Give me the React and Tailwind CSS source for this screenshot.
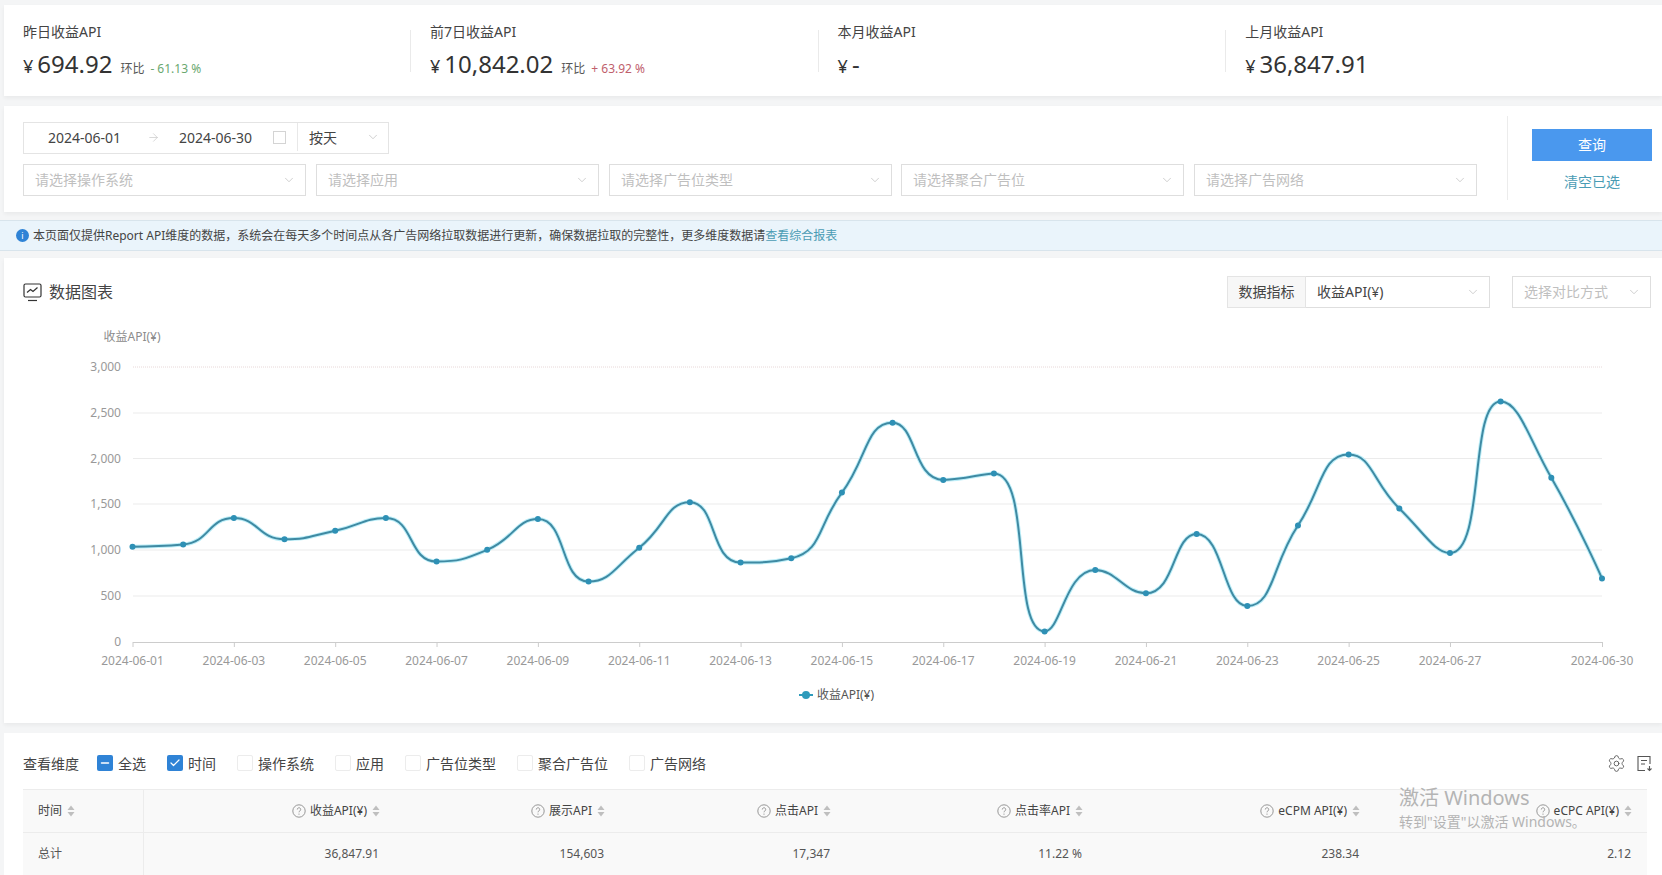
import React from "react";
import { ChevronDown, ArrowRight, Settings, Check, Minus } from "lucide-react";

const W = 1662, H = 470;
const TOP = 258; // chart card top in page coordinates
const sx = (d) => 132.5 + (d * (1602 - 132.5)) / 29;
const raw = [516,514,489,509,501,489,530,519,490,549,517,474,531,527,465,399,453,447,596,538,560,504,572,496,429,480,522,379,451,546];
const pts = raw.map((y, i) => [sx(i), y * 1.0594 - TOP]);

function smooth(p, s = 0.5) {
  const clamp = (v, a, b) => Math.max(Math.min(a, b), Math.min(Math.max(a, b), v));
  let d = `M${p[0][0]} ${p[0][1]}`;
  let cx0 = p[0][0], cy0 = p[0][1];
  for (let i = 0; i < p.length - 1; i++) {
    const prev = p[i];
    const [x, y] = p[i + 1];
    const next = p[i + 2];
    let c1x = x, c1y = y, nx = x, ny = y;
    if (next) {
      const vx0 = next[0] - prev[0], vy0 = next[1] - prev[1];
      const l1 = Math.hypot(x - prev[0], y - prev[1]);
      const l2 = Math.hypot(next[0] - x, next[1] - y);
      const r = l2 / (l1 + l2);
      nx = clamp(x + vx0 * s * r, x, next[0]);
      ny = clamp(y + vy0 * s * r, y, next[1]);
      c1x = clamp(x - (nx - x) * l1 / l2, prev[0], x);
      c1y = clamp(y - (ny - y) * l1 / l2, prev[1], y);
      nx = x + (x - c1x) * l2 / l1;
      ny = y + (y - c1y) * l2 / l1;
    }
    d += ` C${cx0} ${cy0} ${c1x} ${c1y} ${x} ${y}`;
    cx0 = nx; cy0 = ny;
  }
  return d;
}

const yTicks = [["3,000",367],["2,500",413],["2,000",458.5],["1,500",504],["1,000",550],["500",596]];
const xLabels = [0,2,4,6,8,10,12,14,16,18,20,22,24,26];

function Chart() {
  const path = smooth(pts);
  return (
    <svg width={W - 4} height={H} viewBox={`4 ${0} ${W - 4} ${H}`} className="absolute left-0 top-0" style={{ fontFamily: '"Noto Sans","Noto Sans CJK SC",sans-serif' }}>
      <text x="132" y={335 - TOP + 6} fontSize="12" fill="#8c8c8c" textAnchor="middle">收益API(¥)</text>
      {yTicks.map(([t, y]) => (
        <g key={t}>
          <line x1="133" x2="1602" y1={y - TOP} y2={y - TOP} stroke={t === "3,000" ? "#e8d8d8" : "#ebebeb"} strokeDasharray={t === "3,000" ? "1 1" : "none"} />
          <text x="121" y={y - TOP + 4} fontSize="12" fill="#999" textAnchor="end">{t}</text>
        </g>
      ))}
      <text x="121" y={642 - TOP + 4} fontSize="12" fill="#999" textAnchor="end">0</text>
      <line x1="133" x2="1602" y1={642 - TOP + .5} y2={642 - TOP + .5} stroke="#ccc" />
      {[...xLabels, 29].map((d) => (
        <g key={d}>
          <line x1={sx(d) + .5} x2={sx(d) + .5} y1={642 - TOP} y2={647 - TOP} stroke="#ccc" />
          <text x={sx(d)} y={665 - TOP} fontSize="12" fill="#999" textAnchor="middle">{`2024-06-${String(d + 1).padStart(2, "0")}`}</text>
        </g>
      ))}
      <path d={path} fill="none" stroke="#bdeef8" strokeWidth="4" />
      <path d={path} fill="none" stroke="#3f8aa3" strokeWidth="2" />
      {pts.map(([x, y], i) => <circle key={i} cx={x} cy={y} r="3" fill="#2e90b5" />)}
      <line x1="799" x2="813" y1={695 - TOP} y2={695 - TOP} stroke="#2e9bbb" strokeWidth="2" />
      <circle cx="806" cy={695 - TOP} r="4" fill="#2e9bbb" />
      <text x="817" y={699 - TOP} fontSize="12" fill="#555">收益API(¥)</text>
    </svg>
  );
}

function Stat({ label, value, ratio, ratioClass, divider }) {
  return (
    <div className="relative w-[407.6px] pl-[19px] pt-[16px] first:w-[407px]">
      <div className="text-[14px] leading-[22px] text-[#444]">{label}</div>
      <div className="mt-[5px] flex items-baseline text-[#333]">
        <span className="text-[18px] leading-[32px]">¥</span>
        <span className="ml-[4px] text-[24px] leading-[32px]">{value}</span>
        {ratio && <span className="ml-[8px] text-[12px] text-[#555]">环比</span>}
        {ratio && <span className={`ml-[6px] text-[12px] ${ratioClass}`}>{ratio}</span>}
      </div>
      {divider && <div className="absolute right-0 top-[25px] h-[42px] w-px bg-[#eaeaea]" />}
    </div>
  );
}

function Sel({ text, w, ph = true, className = "" }) {
  return (
    <div className={`flex h-[32px] items-center justify-between border border-[#dedede] bg-white pl-[11px] pr-[9px] ${className}`} style={{ width: w }}>
      <span className={`pb-[2px] text-[14px] ${ph ? "text-[#bfbfbf]" : "text-[#444]"}`}>{text}</span>
      <ChevronDown size={14} strokeWidth={1.2} className="text-[#bbb]" />
    </div>
  );
}

function Box({ state, label }) {
  return (
    <div className="flex items-center gap-[5px]">
      <div className={`flex h-[16px] w-[16px] items-center justify-center rounded-[2px] ${state ? "bg-[#2f83d6]" : "border border-[#ececec] bg-white"}`}>
        {state === "check" && <Check size={12} strokeWidth={2.4} className="text-white" />}
        {state === "minus" && <Minus size={12} strokeWidth={3} className="text-white" />}
      </div>
      <span className="text-[14px] text-[#444]">{label}</span>
    </div>
  );
}

function Sort() {
  return (
    <svg width="8" height="12" viewBox="0 0 8 12" className="ml-[5px]">
      <path d="M4 0.5 L7.5 5 L0.5 5 Z" fill="#bfbfbf" />
      <path d="M4 11.5 L7.5 7 L0.5 7 Z" fill="#bfbfbf" />
    </svg>
  );
}

function Q() {
  return (
    <svg width="14" height="14" viewBox="0 0 14 14" className="mr-[4px]">
      <circle cx="7" cy="7" r="6.2" fill="none" stroke="#8c8c8c" strokeWidth="0.9" />
      <path d="M5.3 5.5 a1.7 1.7 0 1 1 2.6 1.4 c-.6 .4 -.9 .7 -.9 1.4" fill="none" stroke="#8c8c8c" strokeWidth="0.9" />
      <circle cx="7" cy="10.1" r="0.6" fill="#8c8c8c" />
    </svg>
  );
}

function Th({ label, w }) {
  return (
    <div className="flex h-full shrink-0 items-center justify-end pr-[15px] text-[12px] text-[#444]" style={{ width: w }}>
      <Q />{label}<Sort />
    </div>
  );
}

function Td({ v, w }) {
  return <div className="shrink-0 pr-[16px] text-right text-[12px] text-[#555]" style={{ width: w }}>{v}</div>;
}

const cols = [
  ["收益API(¥)", "36,847.91", 251],
  ["展示API", "154,603", 225],
  ["点击API", "17,347", 226],
  ["点击率API", "11.22 %", 252],
  ["eCPM API(¥)", "238.34", 277],
  ["eCPC API(¥)", "2.12", 272],
];

export default function App() {
  return (
    <div className="relative h-[875px] w-[1662px] overflow-hidden bg-[#f4f5f6] pl-[4px] pt-[5px]" style={{ fontFamily: '"Noto Sans","Noto Sans CJK SC",sans-serif' }}>
      {/* stats */}
      <div className="flex h-[91px] bg-white shadow-[0_2px_4px_rgba(0,0,0,0.05)]">
        <Stat label="昨日收益API" value="694.92" ratio="- 61.13 %" ratioClass="text-[#6aa86f]" divider />
        <Stat label="前7日收益API" value="10,842.02" ratio="+ 63.92 %" ratioClass="text-[#c0606c]" divider />
        <Stat label="本月收益API" value="-" divider />
        <Stat label="上月收益API" value="36,847.91" />
      </div>

      {/* filters */}
      <div className="mt-[10px] flex h-[106px] bg-white shadow-[0_2px_4px_rgba(0,0,0,0.05)]">
        <div className="w-[1503px] pl-[19px] pt-[16px]">
          <div className="flex h-[32px] w-[366px] items-center border border-[#e4e4e4] pb-[2px] text-[14px] text-[#444]">
            <span className="ml-[24px] w-[72px] whitespace-nowrap">2024-06-01</span>
            <ArrowRight size={13} strokeWidth={1.2} className="ml-[27px] text-[#c4c4c4]" />
            <span className="ml-[19px] w-[72px] whitespace-nowrap">2024-06-30</span>
            <div className="ml-[22px] h-[13px] w-[13px] border border-[#d4d4d4]" />
            <div className="ml-[11px] h-full w-px bg-[#e8e8e8]" />
            <span className="ml-[11px]">按天</span>
            <ChevronDown size={14} strokeWidth={1.2} className="ml-[29px] text-[#bbb]" />
          </div>
          <div className="mt-[10px] flex gap-[10px]">
            <Sel text="请选择操作系统" w="283px" />
            <Sel text="请选择应用" w="283px" />
            <Sel text="请选择广告位类型" w="283px" />
            <Sel text="请选择聚合广告位" w="283px" className="ml-[-1px]" />
            <Sel text="请选择广告网络" w="283px" />
          </div>
        </div>
        <div className="mt-[10px] h-[84px] w-px bg-[#ececec]" />
        <div className="ml-[24px] flex flex-col items-center pt-[23px]">
          <div className="flex h-[32px] w-[120px] items-center justify-center bg-[#4a98ee] pb-[2px] text-[14px] text-white">查询</div>
          <div className="mt-[10px] text-[14px] leading-[22px] text-[#4a9cb4]">清空已选</div>
        </div>
      </div>

      {/* alert */}
      <div className="mt-[8px] ml-[-4px] flex h-[31px] items-center border-y border-[#d8e4ec] bg-[#eaf4fb] pl-[16px] text-[12px] text-[#444]">
        <div className="mr-[4px] flex h-[13px] w-[13px] items-center justify-center rounded-full bg-[#2f83d6] text-[9px] leading-none text-white">i</div>
        本页面仅提供Report API维度的数据，系统会在每天多个时间点从各广告网络拉取数据进行更新，确保数据拉取的完整性，更多维度数据请<span className="text-[#4a9cb4]">查看综合报表</span>
      </div>

      {/* chart */}
      <div className="relative mt-[7px] h-[465px] bg-white shadow-[0_2px_4px_rgba(0,0,0,0.05)]">
        <Chart />
        <div className="relative flex items-center pl-[19px] pt-[18px]">
          <svg width="19" height="19" viewBox="0 0 19 19" fill="none" stroke="#333" strokeWidth="1.2">
            <rect x="1" y="1" width="17" height="13" rx="1.5" />
            <path d="M4 9.5 L7.5 6.5 L10 8.5 L14.5 4.5" />
            <path d="M5 17.5 H14" />
          </svg>
          <span className="ml-[7px] text-[16px] leading-[30px] text-[#444]">数据图表</span>
          <div className="ml-auto mr-[11px] flex">
            <div className="flex h-[32px] w-[79px] items-center justify-center border border-[#e4e4e4] bg-[#f7f7f7] pb-[2px] text-[14px] text-[#444]">数据指标</div>
            <Sel text="收益API(¥)" w="184px" ph={false} className="border-l-0" />
            <Sel text="选择对比方式" w="139px" className="ml-[22px]" />
          </div>
        </div>
      </div>

      {/* table */}
      <div className="mt-[10px] h-[200px] bg-white pl-[19px] pt-[19px]">
        <div className="flex h-[22px] items-center gap-[21px] text-[14px]">
          <span className="mr-[-3px] text-[#444]">查看维度</span>
          <Box state="minus" label="全选" />
          <Box state="check" label="时间" />
          <Box label="操作系统" />
          <Box label="应用" />
          <Box label="广告位类型" />
          <Box label="聚合广告位" />
          <Box label="广告网络" />
          <div className="ml-auto mr-[9px] flex items-center gap-[10px]">
            <Settings size={19} strokeWidth={1.1} className="text-[#555]" />
            <svg width="17" height="17" viewBox="0 0 17 17" fill="none" stroke="#555" strokeWidth="1.1">
              <path d="M9 15.5 H2 V1.5 H14 V9" />
              <path d="M5 5.5 H11 M5 9 H9" />
              <path d="M13.5 11 V15.5 M11.5 13.5 L13.5 15.5 L15.5 13.5" />
            </svg>
          </div>
        </div>
        <div className="mt-[15px] w-[1624px] border-t border-[#ececec] bg-[#f9f9f9]">
          <div className="flex h-[43px] items-center border-b border-[#ececec]">
            <div className="flex h-full w-[121px] shrink-0 items-center border-r border-[#ececec] pl-[15px] text-[12px] text-[#444]">时间<Sort /></div>
            {cols.map(([l, , w]) => <Th key={l} label={l} w={w} />)}
          </div>
          <div className="flex h-[43px] items-center border-b border-[#ececec]">
            <div className="flex h-full w-[121px] shrink-0 items-center border-r border-[#ececec] pl-[15px] text-[12px] text-[#555]">总计</div>
            {cols.map(([l, v, w]) => <Td key={l} v={v} w={w} />)}
          </div>
        </div>
      </div>

      {/* activation watermark */}
      <div className="pointer-events-none absolute left-[1399px] top-[785px] text-[#b4b4b4]">
        <div className="text-[20px] leading-[26px]">激活 Windows</div>
        <div className="mt-[1px] text-[14px] leading-[20px]">转到"设置"以激活 Windows。</div>
      </div>
    </div>
  );
}
